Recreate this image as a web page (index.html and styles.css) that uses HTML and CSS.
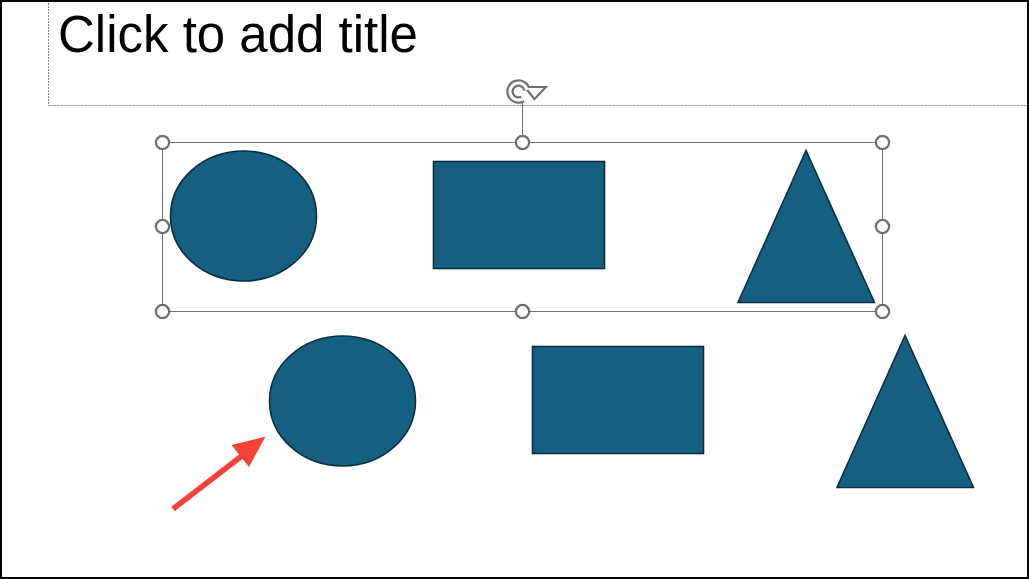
FILE: index.html
```html
<!DOCTYPE html>
<html lang="en">
<head>
<meta charset="utf-8">
<title>Slide</title>
<link rel="stylesheet" href="styles.css">
</head>
<body>
<main class="slide">
  <div class="title-ph">Click to add title</div>
  <svg class="canvas" width="1029" height="579" viewBox="0 0 1029 579" xmlns="http://www.w3.org/2000/svg">
    <!-- title placeholder dashed outline -->
    <g class="dash">
      <line x1="48.5" y1="0" x2="48.5" y2="105.5"/>
      <line x1="48.5" y1="105.5" x2="1029" y2="105.5"/>
    </g>

    <!-- shapes, grouped (top row) -->
    <g class="shape">
      <ellipse cx="243.5" cy="216" rx="73" ry="65"/>
      <rect x="433.5" y="161.5" width="171" height="107"/>
      <polygon points="806,150.5 738,302.5 874.5,302.5"/>
    </g>
    <!-- shapes (bottom row) -->
    <g class="shape" transform="translate(99 185)">
      <ellipse cx="243.5" cy="216" rx="73" ry="65"/>
      <rect x="433.5" y="161.5" width="171" height="107"/>
      <polygon points="806,150.5 738,302.5 874.5,302.5"/>
    </g>

    <!-- selection box -->
    <rect class="sel" x="162.5" y="142.5" width="720" height="169"/>
    <line class="sel" x1="522.5" y1="103" x2="522.5" y2="142"/>

    <!-- rotation handle -->
    <g class="rot">
      <path class="rot-o" d="M522.8 98.9 A8.5 8.5 0 1 1 526.9 90"/>
      <polygon class="rot-ho" points="527,88 543.5,88 534.5,97.5"/>
      <path class="rot-i" d="M522.8 98.9 A8.5 8.5 0 1 1 526.9 90"/>
      <polygon class="rot-hi" points="527,88 543.5,88 534.5,97.5"/>
    </g>

    <!-- handles -->
    <g class="handle">
      <circle cx="162.5" cy="142.5" r="6.6"/>
      <circle cx="522.5" cy="142.5" r="6.6"/>
      <circle cx="882.5" cy="142.5" r="6.6"/>
      <circle cx="162.5" cy="226.5" r="6.6"/>
      <circle cx="882.5" cy="226.5" r="6.6"/>
      <circle cx="162.5" cy="311.5" r="6.6"/>
      <circle cx="522.5" cy="311.5" r="6.6"/>
      <circle cx="882.5" cy="311.5" r="6.6"/>
    </g>

    <!-- red arrow -->
    <line class="arrow-line" x1="173" y1="509" x2="243" y2="455"/>
    <polygon class="arrow-head" points="265.5,436.5 231.5,445 249,467"/>
  </svg>
</main>
</body>
</html>
```
FILE: styles.css
```css
html, body {
  margin: 0;
  padding: 0;
  background: #ffffff;
}

.slide {
  position: relative;
  width: 1029px;
  height: 579px;
  overflow: hidden;
  background: #ffffff;
  font-family: "Liberation Sans", Arial, sans-serif;
}

.slide::after {
  content: "";
  position: absolute;
  inset: 0;
  border: 2px solid #000000;
  pointer-events: none;
}

.title-ph {
  position: absolute;
  left: 48px;
  top: 9px;
  padding-left: 10px;
  font-size: 51px;
  line-height: 51px;
  color: #000000;
  white-space: nowrap;
}

.canvas {
  position: absolute;
  left: 0;
  top: 0;
  display: block;
}

.dash line {
  stroke: #8a8a8a;
  stroke-width: 1;
  stroke-dasharray: 2 1;
  fill: none;
}

.shape ellipse,
.shape rect,
.shape polygon {
  fill: #156082;
  stroke: #0a2e3e;
  stroke-width: 1.6;
}

.sel {
  fill: none;
  stroke: #707070;
  stroke-width: 1;
}

.handle circle {
  fill: #ffffff;
  stroke: #707070;
  stroke-width: 2.3;
}

.rot-o {
  fill: none;
  stroke: #707070;
  stroke-width: 7.5;
}

.rot-i {
  fill: none;
  stroke: #ffffff;
  stroke-width: 3;
}

.rot-ho {
  fill: #ffffff;
  stroke: #707070;
  stroke-width: 4.2;
  stroke-linejoin: miter;
}

.rot-hi {
  fill: #ffffff;
}

.arrow-line {
  stroke: #f44336;
  stroke-width: 5.5;
  stroke-linecap: butt;
}

.arrow-head {
  fill: #f44336;
}
```
